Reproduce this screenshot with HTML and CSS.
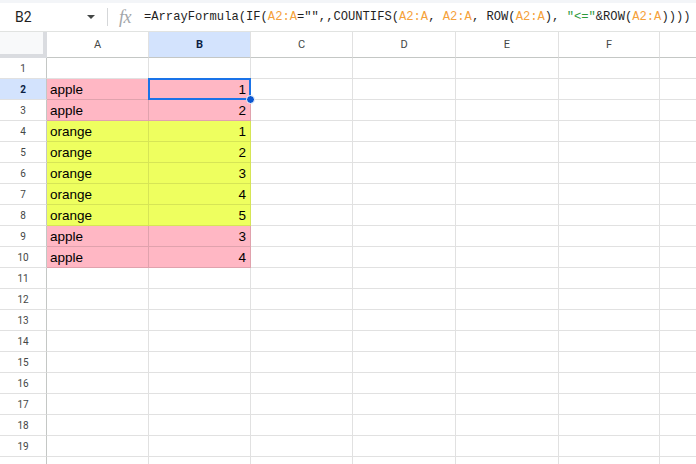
FILE: index.html
```html
<!DOCTYPE html>
<html>
<head>
<meta charset="utf-8">
<link rel="stylesheet" href="styles.css">
</head>
<body>
<div class="app">
  <div class="topstrip"></div>
  <div class="fbar">
    <div class="namebox"><span class="ref">B2</span><span class="caret"></span></div>
    <div class="sep"></div>
    <div class="fx">fx</div>
    <div class="formula">=ArrayFormula(IF(<span class="rng">A2:A</span>="",,COUNTIFS(<span class="rng">A2:A</span>, <span class="rng">A2:A</span>, ROW(<span class="rng">A2:A</span>), <span class="str">"&lt;="</span>&amp;ROW(<span class="rng">A2:A</span>))))</div>
  </div>
  <div class="grid">
    <div class="corner"></div>
    <div class="ch">A</div><div class="ch sel">B</div><div class="ch">C</div><div class="ch">D</div><div class="ch">E</div><div class="ch">F</div><div class="ch last"></div>

    <div class="rh">1</div><div class="c"></div><div class="c"></div><div class="c"></div><div class="c"></div><div class="c"></div><div class="c"></div><div class="c last"></div>
    <div class="rh sel">2</div><div class="c pink">apple</div><div class="c pink num active">1<span class="handle"></span></div><div class="c"></div><div class="c"></div><div class="c"></div><div class="c"></div><div class="c last"></div>
    <div class="rh">3</div><div class="c pink">apple</div><div class="c pink num">2</div><div class="c"></div><div class="c"></div><div class="c"></div><div class="c"></div><div class="c last"></div>
    <div class="rh">4</div><div class="c yel">orange</div><div class="c yel num">1</div><div class="c"></div><div class="c"></div><div class="c"></div><div class="c"></div><div class="c last"></div>
    <div class="rh">5</div><div class="c yel">orange</div><div class="c yel num">2</div><div class="c"></div><div class="c"></div><div class="c"></div><div class="c"></div><div class="c last"></div>
    <div class="rh">6</div><div class="c yel">orange</div><div class="c yel num">3</div><div class="c"></div><div class="c"></div><div class="c"></div><div class="c"></div><div class="c last"></div>
    <div class="rh">7</div><div class="c yel">orange</div><div class="c yel num">4</div><div class="c"></div><div class="c"></div><div class="c"></div><div class="c"></div><div class="c last"></div>
    <div class="rh">8</div><div class="c yel">orange</div><div class="c yel num">5</div><div class="c"></div><div class="c"></div><div class="c"></div><div class="c"></div><div class="c last"></div>
    <div class="rh">9</div><div class="c pink">apple</div><div class="c pink num">3</div><div class="c"></div><div class="c"></div><div class="c"></div><div class="c"></div><div class="c last"></div>
    <div class="rh">10</div><div class="c pink">apple</div><div class="c pink num">4</div><div class="c"></div><div class="c"></div><div class="c"></div><div class="c"></div><div class="c last"></div>
    <div class="rh">11</div><div class="c"></div><div class="c"></div><div class="c"></div><div class="c"></div><div class="c"></div><div class="c"></div><div class="c last"></div>
    <div class="rh">12</div><div class="c"></div><div class="c"></div><div class="c"></div><div class="c"></div><div class="c"></div><div class="c"></div><div class="c last"></div>
    <div class="rh">13</div><div class="c"></div><div class="c"></div><div class="c"></div><div class="c"></div><div class="c"></div><div class="c"></div><div class="c last"></div>
    <div class="rh">14</div><div class="c"></div><div class="c"></div><div class="c"></div><div class="c"></div><div class="c"></div><div class="c"></div><div class="c last"></div>
    <div class="rh">15</div><div class="c"></div><div class="c"></div><div class="c"></div><div class="c"></div><div class="c"></div><div class="c"></div><div class="c last"></div>
    <div class="rh">16</div><div class="c"></div><div class="c"></div><div class="c"></div><div class="c"></div><div class="c"></div><div class="c"></div><div class="c last"></div>
    <div class="rh">17</div><div class="c"></div><div class="c"></div><div class="c"></div><div class="c"></div><div class="c"></div><div class="c"></div><div class="c last"></div>
    <div class="rh">18</div><div class="c"></div><div class="c"></div><div class="c"></div><div class="c"></div><div class="c"></div><div class="c"></div><div class="c last"></div>
    <div class="rh">19</div><div class="c"></div><div class="c"></div><div class="c"></div><div class="c"></div><div class="c"></div><div class="c"></div><div class="c last"></div>
    <div class="rh"></div><div class="c"></div><div class="c"></div><div class="c"></div><div class="c"></div><div class="c"></div><div class="c"></div><div class="c last"></div>
  </div>
</div>
</body>
</html>
```

FILE: styles.css
```css
* { box-sizing: border-box; }
html, body { margin: 0; padding: 0; background: #fff; }
body { width: 696px; height: 464px; overflow: hidden; font-family: "Liberation Sans", Arial, sans-serif; }
.app { width: 696px; height: 464px; overflow: hidden; }
.topstrip { height: 3px; background: #f3f5f8; }
.fbar {
  height: 29px;
  display: flex;
  align-items: center;
  border-bottom: 1px solid #e1e3e1;
  background: #fff;
}
.namebox { width: 107px; display: flex; align-items: center; padding-left: 15px; }
.ref { font-family: Roboto, "Noto Sans", sans-serif; font-size: 14px; color: #1f1f1f; flex: 1; }
.caret {
  width: 0; height: 0;
  border-left: 4px solid transparent;
  border-right: 4px solid transparent;
  border-top: 4px solid #444746;
  margin-right: 12px;
}
.sep { width: 1px; height: 18px; background: #d5d7d9; }
.fx {
  font-family: "Liberation Serif", "DejaVu Serif", serif;
  font-style: italic;
  font-size: 18px;
  color: #a3a6a9;
  margin-left: 11px;
  width: 25px;
  letter-spacing: -0.5px;
}
.formula {
  font-family: "Liberation Mono", "DejaVu Sans Mono", monospace;
  font-size: 12.15px;
  color: #1f1f1f;
  white-space: nowrap;
}
.rng { color: #f5a13a; }
.str { color: #2e9a3c; }

.grid {
  display: grid;
  grid-template-columns: 47px 102px 102px 102px 103px 103px 101px 1fr;
  grid-template-rows: 26px repeat(20, 21px);
}
.corner {
  background: #f8f9fa;
  border-right: 4px solid #dadce0;
  border-bottom: 4px solid #dadce0;
}
.ch {
  border-right: 1px solid #e1e1e1;
  border-bottom: 1px solid #c4c7c5;
  display: flex; align-items: center; justify-content: center;
  font-family: Roboto, "Noto Sans", sans-serif;
  font-size: 11px;
  color: #444746;
  background: #fff;
}
.ch.sel { background: #d3e3fd; color: #0b1f44; font-weight: 700; }
.ch.last { border-right: none; }
.rh {
  border-right: 1px solid #c4c7c5;
  border-bottom: 1px solid #e1e1e1;
  display: flex; align-items: center; justify-content: center;
  font-family: Roboto, "Noto Sans", sans-serif;
  font-size: 10px;
  color: #444746;
  background: #fff;
}
.rh.sel { background: #d3e3fd; color: #0b1f44; font-weight: 700; }
.c {
  border-right: 1px solid #e1e1e1;
  border-bottom: 1px solid #e1e1e1;
  font-size: 13.5px;
  color: #000;
  padding: 1px 3px 0;
  line-height: 20px;
  white-space: nowrap;
  position: relative;
}
.c.last { border-right: none; }
.pink { background: #ffb7c4; border-right-color: #e0a2ad; border-bottom-color: #e0a2ad; }
.yel { background: #eeff5f; border-right-color: #d6e556; border-bottom-color: #d6e556; }
.num { text-align: right; padding-right: 4px; }
.active::after {
  content: "";
  position: absolute;
  left: -1px; top: -1px; right: -1px; bottom: -1px;
  border: 2px solid #1a73e8;
}
.handle {
  position: absolute;
  right: -5px; bottom: -5px;
  width: 9px; height: 9px;
  border-radius: 50%;
  background: #0b57d0;
  border: 1px solid #fff;
  z-index: 2;
}
```
